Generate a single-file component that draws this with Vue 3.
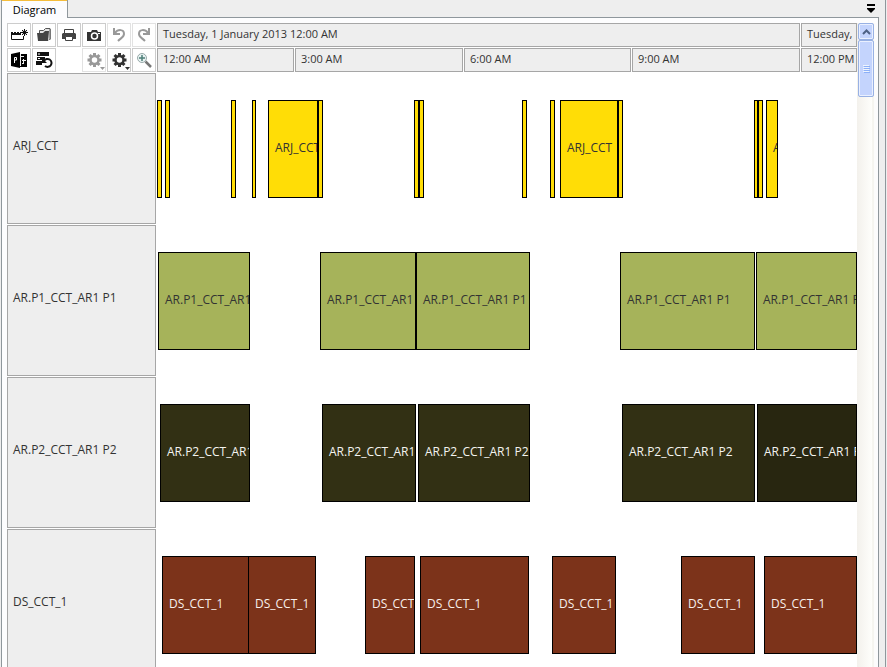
<script setup>
const SPAN = 700

const rows = [
  {
    name: 'ARJ_CCT',
    tone: 'yellow',
    bars: [
      [0, 5], [8, 5], [74, 5], [95, 4], [111, 50, 'ARJ_CCT'], [161, 5],
      [257, 5], [262, 5], [365, 5], [393, 5], [403, 58, 'ARJ_CCT'], [461, 5],
      [597, 4], [601, 5], [609, 12, 'ARJ_CCT'],
    ],
  },
  {
    name: 'AR.P1_CCT_AR1 P1',
    tone: 'green',
    bars: [[1, 92], [163, 96], [259, 114], [463, 135], [599, 101]],
  },
  {
    name: 'AR.P2_CCT_AR1 P2',
    tone: 'dark',
    bars: [[3, 90], [165, 94], [261, 112], [465, 133], [600, 100]],
    shadedLast: true,
  },
  {
    name: 'DS_CCT_1',
    tone: 'rust',
    bars: [[5, 87], [91, 68], [208, 50], [263, 109], [395, 64], [524, 74], [607, 93]],
  },
]

const place = ([start, length]) => ({
  left: (start / SPAN) * 100 + '%',
  width: (length / SPAN) * 100 + '%',
})

const caption = (row, bar) => (row.tone === 'yellow' ? bar[2] || '' : row.name)

const hours = ['12:00 AM', '3:00 AM', '6:00 AM', '9:00 AM', '12:00 PM']
const teeth = [0, 45, 90, 135, 180, 225, 270, 315]
</script>

<template>
  <div class="window">
    <header class="tabs">
      <button class="tab" type="button">Diagram</button>
      <button class="tab-menu" type="button" aria-label="Tab list">
        <svg width="10" height="9" viewBox="0 0 10 9"><path d="M1 0h8v2H1zM1 4h8v1L5 9 1 5z" fill="#000" /></svg>
      </button>
    </header>

    <main class="panel">
      <div class="diagram">
        <div class="top">
          <div class="toolbar">
            <button type="button" aria-label="New">
              <svg viewBox="0 0 22 22"><path d="M3 8h2v1h1V8h2v1h1V8h2v1h1V8h1v3H3z" fill="#111" /><path d="M3.500 10v5.500h12V12" fill="none" stroke="#111" /><path d="M16.500 5v7M13 8.500h7M14 6l5 5M19 6l-5 5" stroke="#111" /><circle cx="16.500" cy="8.500" r="2" fill="#111" /></svg>
            </button>
            <button type="button" aria-label="Open">
              <svg viewBox="0 0 22 22"><path d="M6.500 9V6.500h4l2-2h4.500v11" fill="#e4e4e4" stroke="#555" /><path d="M4 9h6l2-2h4l-1 10H5z" fill="#444" /><path d="M17.500 5v10l-2 1" fill="none" stroke="#777" /></svg>
            </button>
            <button type="button" aria-label="Print">
              <svg viewBox="0 0 22 22"><path d="M6.500 9V5.500h9V9" fill="#fff" stroke="#444" /><path d="M5 9h12l1 1v5H4v-5z" fill="#444" /><path d="M7.500 12.500h7v4h-7z" fill="#fff" stroke="#444" /></svg>
            </button>
            <button type="button" aria-label="Snapshot">
              <svg viewBox="0 0 22 22"><path d="M4 8h4l1-2h5l1 2h3v9H4z" fill="#333" /><circle cx="11.500" cy="12" r="3" fill="#333" stroke="#fff" stroke-width="1.500" /><path d="M15 9h2v1h-2z" fill="#fff" /></svg>
            </button>
            <button class="faint" type="button" aria-label="Undo">
              <svg viewBox="0 0 22 22"><path d="M6 4v6h6M7 9c3-4 9-4 9 1 0 3-3 4-6 7" fill="none" stroke="#999" stroke-width="2" /></svg>
            </button>
            <button class="faint" type="button" aria-label="Redo">
              <svg viewBox="0 0 22 22"><path d="M16 4v6h-6M15 9c-3-4-9-4-9 1 0 3 3 4 6 7" fill="none" stroke="#999" stroke-width="2" /></svg>
            </button>
            <button type="button" aria-label="Project">
              <svg viewBox="0 0 22 22"><path d="M3 5l9-2v16l-9-2z" fill="#000" /><path d="M13 5h6v13h-7v-1h-1V5z" fill="#000" /><path d="M6.500 14V8.500h2v2.500h-2" fill="none" stroke="#fff" /><path d="M12.500 5v12M13 7.500h3M15.500 10v4M14 11.500h4M14 14.500h2" fill="none" stroke="#eee" /></svg>
            </button>
            <button type="button" aria-label="Reload rows">
              <svg viewBox="0 0 22 22"><path d="M4 3h12v4H4zM4 8h8v3H4zM3 12h6v4H3z" fill="#111" /><path d="M5 5h2M5 9.500h2" stroke="#fff" /><path d="M11 12a4 4 0 1 1 1 5" fill="none" stroke="#111" stroke-width="2" /><path d="M9 9v5h5z" fill="#111" /></svg>
            </button>
            <button class="faint fourth" type="button" aria-label="Row settings">
              <svg viewBox="0 0 22 22"><g fill="#999"><rect v-for="a in teeth" :key="a" x="10" y="4" width="3" height="3" :transform="`rotate(${a} 11.500 11)`" /></g><circle cx="11.500" cy="11" r="4" fill="none" stroke="#999" stroke-width="2.500" /><path d="M17 18h5l-2.500 3z" fill="#999" /></svg>
            </button>
            <button type="button" aria-label="Settings">
              <svg viewBox="0 0 22 22"><g fill="#333"><rect v-for="a in teeth" :key="a" x="10" y="4" width="3" height="3" :transform="`rotate(${a} 11.500 11)`" /></g><circle cx="11.500" cy="11" r="4" fill="none" stroke="#333" stroke-width="2.500" /><path d="M17 18h5l-2.500 3z" fill="#333" /></svg>
            </button>
            <button type="button" aria-label="Zoom in">
              <svg viewBox="0 0 22 22"><circle cx="9" cy="9" r="4.500" fill="#e9f3f3" stroke="#9aa" /><path d="M9 6v6M6 9h6" stroke="#4d7f78" stroke-width="1.500" /><path d="M12.500 12.500l5.500 5.500" stroke="#777" stroke-width="2.500" /></svg>
            </button>
          </div>
          <div class="scale">
            <div class="days">
              <div class="cell">Tuesday, 1 January 2013 12:00 AM</div>
              <div class="cell">Tuesday,</div>
            </div>
            <div class="hours">
              <div v-for="h in hours" :key="h" class="cell">{{ h }}</div>
            </div>
          </div>
        </div>

        <div v-for="row in rows" :key="row.name" class="row">
          <div class="name">{{ row.name }}</div>
          <div class="lane" :class="[row.tone, { shaded: row.shadedLast }]">
            <div v-for="(bar, i) in row.bars" :key="i" class="bar" :style="place(bar)"><span v-if="caption(row, bar)">{{ caption(row, bar) }}</span></div>
          </div>
        </div>
      </div>

      <div class="scroll">
        <button class="up" type="button" aria-label="Scroll up">
          <svg width="9" height="6" viewBox="0 0 9 6"><path d="M1 5l3.500-3.500L8 5" fill="none" stroke="#4d6185" stroke-width="2" /></svg>
        </button>
        <div class="thumb"><i></i><i></i><i></i><i></i></div>
      </div>
    </main>
  </div>
</template>

<style>
body {
  margin: 0;
  background: #eee;
}
</style>

<style scoped>
.window {
  box-sizing: border-box;
  height: 100vh;
  display: flex;
  flex-direction: column;
  overflow: hidden;
  padding-right: 6px;
  margin-right: 1px;
  border-left: 1px solid #eee;
  border-right: 1px solid #8f979c;
  background: #eee;
  color: #333;
  font: 12px/16px "Open Sans", "Noto Sans", sans-serif;
}
button {
  box-sizing: border-box;
  margin: 0;
  padding: 0;
  font: inherit;
}
.tabs {
  display: flex;
  flex: none;
  justify-content: space-between;
  height: 18px;
  box-shadow: inset 0 -1px #8f979c;
}
.tab {
  width: 67px;
  padding-top: 1px;
  border: solid #8f979c;
  border-width: 0 1px;
  background: #fcfcfe;
  box-shadow: inset 0 1px #f5bd3c;
  color: #000;
  font-size: 11px;
}
.tab-menu {
  display: flex;
  margin: 4px 3px 0 0;
  height: 9px;
  border: 0;
  background: none;
}
.panel {
  flex: 1;
  min-height: 0;
  display: flex;
  padding: 5px 0 0 5px;
  border: solid #8f979c;
  border-width: 0 1px;
  background: #fdfdfe;
}
.diagram {
  flex: 1;
  min-width: 0;
  display: flex;
  flex-direction: column;
  gap: 1px;
  overflow: hidden;
  background: #fff;
}
.top,
.row {
  display: grid;
  flex: none;
  grid-template-columns: 149px minmax(0, 1fr);
  gap: 1px;
}
.toolbar {
  display: grid;
  grid-template-columns: repeat(6, 24px);
  grid-auto-rows: 24px;
  gap: 1px;
}
.toolbar button {
  border: 1px solid #ccc;
  background: #fff;
}
.toolbar .faint {
  border-color: #e2e2e2;
}
.toolbar .fourth {
  grid-column: 4;
}
.toolbar svg {
  display: block;
  width: 22px;
  height: 22px;
}
.scale,
.days,
.hours {
  display: grid;
  gap: 1px;
}
.days {
  grid-template-columns: minmax(0, 643fr) minmax(0, 56fr);
}
.hours {
  grid-template-columns: minmax(0, 137fr) minmax(0, 168fr) minmax(0, 167fr) minmax(0, 168fr) minmax(0, 56fr);
}
.cell {
  box-sizing: border-box;
  height: 24px;
  padding: 2px 0 0 5px;
  overflow: hidden;
  border: 1px solid #a6a6a6;
  background: #eee;
  font-size: 11px;
  white-space: nowrap;
}
.name {
  box-sizing: border-box;
  display: flex;
  align-items: center;
  height: 151px;
  padding: 0 5px 5px;
  border: 1px solid #a6a6a6;
  background: #eee;
}
.lane {
  position: relative;
  overflow: hidden;
}
.bar {
  position: absolute;
  top: 27px;
  box-sizing: border-box;
  display: flex;
  align-items: center;
  height: 98px;
  padding-bottom: 2px;
  overflow: hidden;
  border: 1px solid #000;
  white-space: nowrap;
}
.bar span {
  padding-left: 6px;
}
.yellow .bar {
  background: #ffdd06;
}
.green .bar {
  background: #a6b35a;
}
.dark .bar {
  background: #323014;
  color: #f4f4f0;
}
.shaded .bar:last-child {
  background: #282610;
}
.rust .bar {
  background: #7c331a;
  color: #f8f0ec;
}
.scroll {
  box-sizing: border-box;
  flex: none;
  width: 21px;
  padding: 0 4px 0 1px;
  background: linear-gradient(90deg, #f3f1ec, #fefefb 15px, #eeede5 16px, #fcfcfb 17px, #fcfcfe);
}
.up,
.thumb {
  box-sizing: border-box;
  display: flex;
  align-items: center;
  justify-content: center;
  width: 16px;
  border: 1px solid #98b1e4;
  border-radius: 2px;
  background: #c4d4fd;
  box-shadow: inset 0 0 0 1px #eaf0ff;
}
.up {
  height: 17px;
}
.thumb {
  flex-direction: column;
  gap: 1px;
  height: 57px;
}
.thumb i {
  width: 6px;
  height: 1px;
  background: #eef4fe;
  box-shadow: 1px 1px #8cb0f8;
}
</style>
